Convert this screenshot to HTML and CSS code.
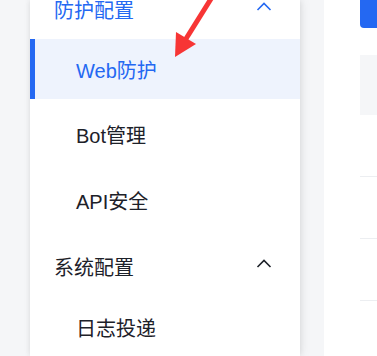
FILE: index.html
```html
<!DOCTYPE html>
<html lang="zh-CN">
<head>
<meta charset="utf-8">
<link rel="stylesheet" href="styles.css">
</head>
<body>
<div class="page">
  <div class="gutter"></div>
  <aside class="sidebar">
    <div class="menu">
      <div class="group">
        <div class="group-head active-head">
          <span>防护配置</span>
          <svg class="chev" width="16" height="9" viewBox="0 0 16 9"><polyline points="1.5,8 8,1.5 14.5,8" fill="none" stroke="currentColor" stroke-width="1.6"/></svg>
        </div>
        <div class="item active">Web防护</div>
        <div class="item">Bot管理</div>
        <div class="item">API安全</div>
      </div>
      <div class="group">
        <div class="group-head">
          <span>系统配置</span>
          <svg class="chev" width="16" height="9" viewBox="0 0 16 9"><polyline points="1.5,8 8,1.5 14.5,8" fill="none" stroke="currentColor" stroke-width="1.6"/></svg>
        </div>
        <div class="item">日志投递</div>
      </div>
    </div>
  </aside>
  <div class="shade"></div>
  <main class="main">
    <div class="btn"></div>
    <div class="thead"></div>
    <div class="row"></div>
    <div class="row"></div>
    <div class="row"></div>
  </main>
</div>
<svg class="arrow" width="377" height="356" viewBox="0 0 377 356">
  <line x1="214" y1="-6" x2="184" y2="42" stroke="#f73535" stroke-width="5"/>
  <polygon points="175,57 176,32 196,44" fill="#f73535"/>
</svg>
</body>
</html>
```

FILE: styles.css
```css
html, body {
  margin: 0;
  padding: 0;
  background: #f5f6f8;
  font-family: "Liberation Sans", "Noto Sans CJK SC", sans-serif;
  overflow: hidden;
}
.page {
  display: flex;
  width: 377px;
  height: 356px;
}
.gutter {
  width: 30px;
  flex: none;
}
.sidebar {
  width: 270px;
  flex: none;
  background: #fff;
  box-shadow: 0 0 6px rgba(0, 0, 0, 0.10), 3px 0 10px rgba(0, 0, 0, 0.05);
  position: relative;
  z-index: 1;
  overflow: hidden;
}
.menu {
  margin-top: -21px;
}
.group {
  padding-bottom: 5px;
}
.group-head {
  height: 60px;
  display: flex;
  align-items: center;
  justify-content: space-between;
  padding: 0 28px 0 24px;
  font-size: 20px;
  color: #1d2129;
}
.group-head .chev {
  margin-top: -5px;
}
.active-head {
  color: #2468f2;
}
.item {
  height: 62px;
  display: flex;
  align-items: center;
  padding-left: 46px;
  font-size: 20px;
  color: #1d2129;
}
.item + .item {
  margin-top: 4px;
}
.item.active {
  height: 60px;
  background: #eef3fd;
  color: #2468f2;
  box-shadow: inset 5px 0 0 #2468f2;
}
.shade {
  width: 24px;
  flex: none;
}
.main {
  flex: 1;
  background: #fff;
  padding-left: 36px;
  display: flex;
  flex-direction: column;
}
.btn {
  margin-top: -4px;
  height: 32px;
  background: #2468f2;
  border-radius: 4px 0 0 4px;
}
.thead {
  margin-top: 27px;
  height: 60px;
  background: #f5f6f8;
}
.row {
  height: 61px;
  border-bottom: 1px solid #eceef1;
}
.arrow {
  position: absolute;
  left: 0;
  top: 0;
  z-index: 5;
  pointer-events: none;
}
```
